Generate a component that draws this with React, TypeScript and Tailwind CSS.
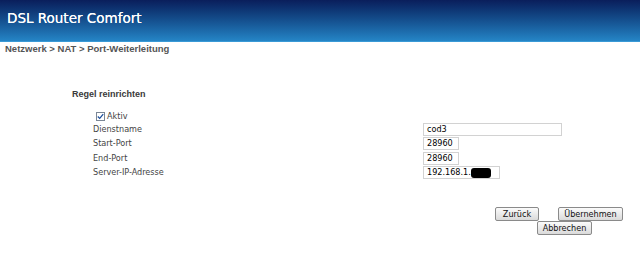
import React from 'react';

const Field: React.FC<{ value: string; width: string; children?: React.ReactNode }> = ({ value, width, children }) => (
  <div className={`flex h-[13px] items-center border border-[#d2d2d2] bg-white pl-[3px] text-[9px] leading-none text-black ${width}`}>
    <span>{value}</span>
    {children}
  </div>
);

const Button: React.FC<{ label: string; width: string }> = ({ label, width }) => (
  <button
    className={`flex h-[14px] items-center justify-center rounded-[2px] border border-[#8a8a8a] bg-gradient-to-b from-[#fbfbfb] to-[#dadada] text-[9px] leading-none text-[#111] ${width}`}
  >
    {label}
  </button>
);

const App: React.FC = () => {
  return (
    <div className="flex h-[257px] w-[640px] flex-col bg-white font-['DejaVu_Sans_Condensed','DejaVu_Sans',sans-serif]">
      <header className="flex h-[42px] items-center border-b border-[#3a9ad6] bg-gradient-to-b from-[#0a1e5b] to-[#2585c6] pb-[5px] pl-[7px]">
        <h1 className="font-['DejaVu_Sans',sans-serif] text-[13.5px] font-normal text-white [text-shadow:0_0_0.4px_#fff]">
          DSL Router Comfort
        </h1>
      </header>

      <div className="pl-[5px] font-['Liberation_Sans',sans-serif] text-[9.5px] font-bold leading-[14px] text-[#555]">
        Netzwerk &gt; NAT &gt; Port-Weiterleitung
      </div>

      <main className="flex flex-col pl-[72px] pt-[32px]">
        <h2 className="font-['Liberation_Sans',sans-serif] text-[9px] font-bold leading-[12px] text-[#3a3a3a]">
          Regel reinrichten
        </h2>

        <div className="mt-[10px] flex h-[13px] items-center gap-[2px] pl-[24px] text-[9px] text-[#444]">
          <span className="flex h-[9px] w-[9px] items-center justify-center border border-[#7b8796] bg-white">
            <svg viewBox="0 0 9 9" className="h-[7px] w-[7px]">
              <path d="M1 4.5 L3.5 7 L8 1.5" fill="none" stroke="#1d4f9c" strokeWidth="1.6" />
            </svg>
          </span>
          <span>Aktiv</span>
        </div>

        <div className="grid grid-cols-[330px_auto] gap-y-[1.4px] pl-[21px] text-[9px] leading-none text-[#444]">
          <div className="flex items-center">Dienstname</div>
          <Field value="cod3" width="w-[139px]" />
          <div className="flex items-center">Start-Port</div>
          <Field value="28960" width="w-[36px]" />
          <div className="flex items-center">End-Port</div>
          <Field value="28960" width="w-[36px]" />
          <div className="flex items-center">Server-IP-Adresse</div>
          <Field value="192.168.1." width="w-[77px]">
            <span className="h-[10px] w-[20px] rounded-[3px] bg-black" />
          </Field>
        </div>
      </main>

      <footer className="mt-[28px] flex flex-col items-end pr-[17px]">
        <div className="flex gap-[19px]">
          <Button label="Zurück" width="w-[44px]" />
          <Button label="Übernehmen" width="w-[65px]" />
        </div>
        <div className="mr-[31px]">
          <Button label="Abbrechen" width="w-[55px]" />
        </div>
      </footer>
    </div>
  );
};

export default App;
